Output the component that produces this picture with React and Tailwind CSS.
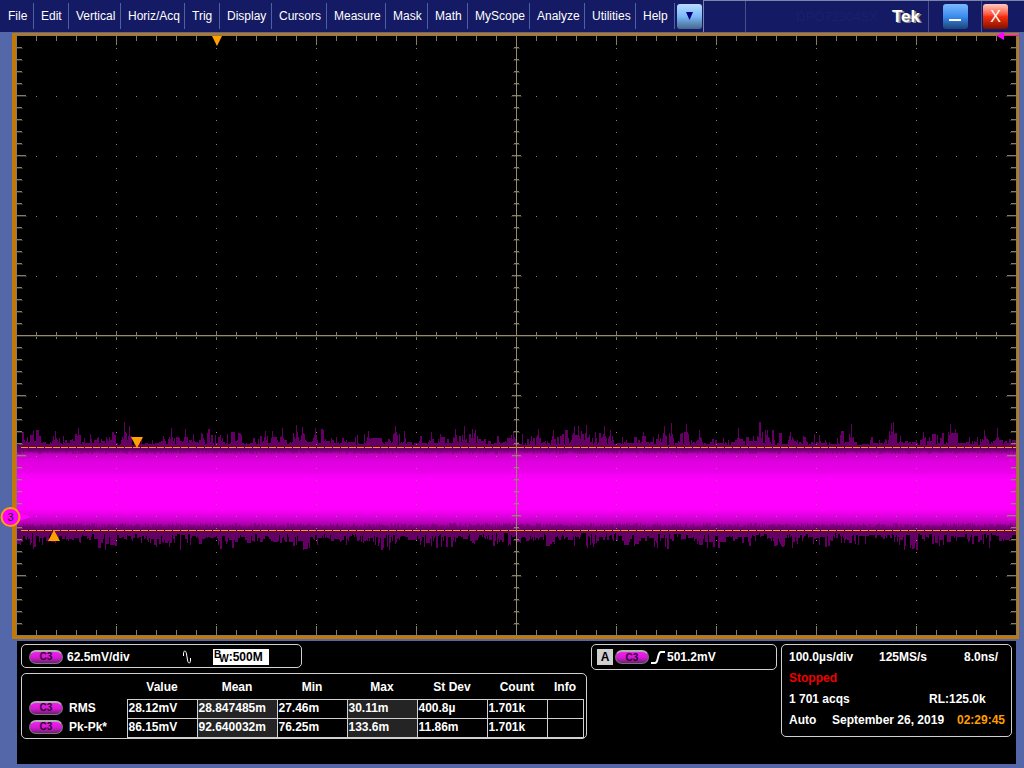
import { useMemo } from 'react';
import clsx from 'clsx';

const menuItems = [
  { label: 'File', width: 'w-[33px]' },
  { label: 'Edit', width: 'w-[35px]' },
  { label: 'Vertical', width: 'w-[52px]' },
  { label: 'Horiz/Acq', width: 'w-[64px]' },
  { label: 'Trig', width: 'w-[35px]' },
  { label: 'Display', width: 'w-[52px]' },
  { label: 'Cursors', width: 'w-[55px]' },
  { label: 'Measure', width: 'w-[59px]' },
  { label: 'Mask', width: 'w-[42px]' },
  { label: 'Math', width: 'w-[40px]' },
  { label: 'MyScope', width: 'w-[62px]' },
  { label: 'Analyze', width: 'w-[55px]' },
  { label: 'Utilities', width: 'w-[51px]' },
  { label: 'Help', width: 'w-[39px]' },
];

const columns = ['Value', 'Mean', 'Min', 'Max', 'St Dev', 'Count', 'Info'];

const measurements = [
  { name: 'RMS', values: ['28.12mV', '28.847485m', '27.46m', '30.11m', '400.8µ', '1.701k', ''] },
  { name: 'Pk-Pk*', values: ['86.15mV', '92.640032m', '76.25m', '133.6m', '11.86m', '1.701k', ''] },
];

// tallest spikes above the band, as [x, y]
const peaks = [
  [38, 396], [61, 393], [107, 387], [112, 391], [154, 393], [168, 394], [176, 399], [185, 399],
  [203, 400], [248, 396], [265, 393], [279, 390], [285, 392], [298, 393], [306, 395], [351, 396],
  [378, 391], [414, 397], [438, 394], [447, 391], [455, 394], [496, 396], [521, 394], [536, 395],
  [557, 391], [561, 391], [569, 390], [587, 391], [593, 395], [626, 397], [647, 391], [654, 388],
  [669, 389], [682, 395], [721, 393], [742, 387], [743, 387], [750, 395], [773, 397], [834, 389],
  [874, 388], [876, 387], [906, 397], [933, 389], [938, 394], [967, 395], [980, 393],
];

function makeRandom(seed) {
  let s = seed;
  return () => {
    s = (s * 1664525 + 1013904223) % 4294967296;
    return s / 4294967296;
  };
}

function buildWave() {
  const rand = makeRandom(72304);
  const peakAt = Object.fromEntries(peaks);
  let spikes = '';
  let fringe = '';
  let low = 410;
  let high = 500;
  for (let x = 0; x < 1000; x++) {
    const near = peakAt[x - 1] || peakAt[x + 1] || peakAt[x - 2] || peakAt[x + 2];
    const swell = 0.7 + 0.3 * Math.sin(x / 9) * Math.sin(x / 23);
    // some columns repeat the one before, so the spikes clump
    if (rand() > 0.35) low = 410 - Math.round(Math.pow(rand(), 3) * 16 * swell + rand() * 3);
    let top = low;
    if (near) top = Math.min(top, Math.round(412 - (412 - near) * (0.3 + rand() * 0.4)));
    if (peakAt[x]) top = peakAt[x];
    const bottomSwell = 0.65 + 0.35 * Math.sin(x / 8) * Math.cos(x / 31);
    if (rand() > 0.35) high = 498 + Math.round(Math.pow(rand(), 1.5) * 17 * bottomSwell + rand() * 4);
    spikes += `M${x + 1.5} ${top}V${high}`;
    const a = 415 + Math.round(rand() * 4);
    const b = 493 - Math.round(rand() * 5);
    fringe += `M${x + 1.5} 413V${a}M${x + 1.5} ${b}V495`;
  }
  return { spikes, fringe };
}

function buildGrid() {
  let dots = '';
  let bright = '';
  let dim = '';
  for (let k = 1; k < 10; k++) {
    if (k === 5) continue;
    for (let i = 1; i < 50; i++) {
      dots += `M${k * 100} ${i * 12 + 1.5}h1`;
      dots += `M${i * 20} ${k * 60 + 1.5}h1`;
    }
  }
  for (let i = 1; i < 50; i++) {
    const x = i * 20 + 0.5;
    const y = i * 12 + 0.5;
    const major = i % 5 === 0;
    bright += `M${x} 1V${major ? 10 : 6}`;
    bright += `M${x} 600V${major ? 591 : 595}`;
    bright += `M${x} ${major ? 296 : 297}V${major ? 305 : 304}`;
    const len = major ? 10 : 6;
    bright += `M1 ${y}h${len - 1}M1000 ${y}h${-len + 1}`;
    bright += `M${major ? 496 : 498} ${y}h${major ? 9 : 5}`;
    dim += `M1 ${y + 1}h${len}M1000 ${y + 1}h${-len}`;
    dim += `M${major ? 495 : 497} ${y + 1}h${major ? 11 : 7}`;
  }
  return { dots, bright, dim };
}

const SourceBadge = () => (
  <span className="flex h-[14px] w-[34px] shrink-0 items-center justify-center rounded-full border border-t-2 border-[#777] border-t-[#b0b0b0] bg-linear-to-b from-[#f020f0] via-[#d818d8] to-[#6e1c70] text-[10px] leading-none font-bold text-[#300030]">
    C3
  </span>
);

const MenuBar = () => (
  <header className="flex h-8 bg-[#141a63] text-[12px] text-white">
    <nav className="flex h-full items-center pl-px">
      {menuItems.map((item) => (
        <button
          key={item.label}
          className={clsx(
            'h-[26px] shrink-0 border-r border-[#4d62a4] pl-[7px] text-left whitespace-nowrap',
            item.width
          )}
        >
          {item.label}
        </button>
      ))}
    </nav>
    <div className="flex w-[28px] items-center pl-[2px]">
      <button
        aria-label="More menus"
        className="flex h-[25px] w-[25px] items-center justify-center rounded-[3px] bg-linear-to-b from-[#b8dcff] via-[#7ab8fa] to-[#46688c]"
      >
        <svg width="7" height="8" viewBox="0 0 7 8">
          <path d="M0 0H7L3.5 8Z" fill="#000080" />
        </svg>
      </button>
    </div>
    <div className="flex flex-1 border-t border-l border-[#7c83ad]">
      <div className="w-[42px] border-r border-[#4a4f86]" />
      <div className="flex flex-1 items-center justify-end gap-[14px] pr-2">
        <span className="text-[13px] text-[#1b2169]">DPO72304SX</span>
        <span className="text-[17px] font-bold [text-shadow:1px_1px_0_#8c8c8c,2px_1px_0_#8c8c8c]">Tek</span>
      </div>
      <div className="flex w-[54px] items-center justify-center border-x border-[#4a4f86]">
        <button
          aria-label="Minimize"
          className="flex h-[25px] w-[25px] items-end justify-center rounded-[3px] bg-linear-to-b from-[#7ab8fa] via-[#3b8cf0] to-[#1c4478] pb-2"
        >
          <span className="h-[2px] w-3 bg-white" />
        </button>
      </div>
      <div className="flex w-[42px] items-center pl-px">
        <button
          aria-label="Close"
          className="flex h-[25px] w-[25px] items-center justify-center rounded-[3px] bg-linear-to-b from-[#ffc8c0] via-[#f83010] to-[#801000] text-[16px]"
        >
          X
        </button>
      </div>
    </div>
  </header>
);

const Graticule = () => {
  const wave = useMemo(buildWave, []);
  const grid = useMemo(buildGrid, []);

  return (
    <svg viewBox="0 0 1001 601" className="block w-full overflow-visible" role="img" aria-label="Channel 3 waveform">
      <defs>
        <linearGradient id="band" gradientUnits="userSpaceOnUse" x1="0" y1="413" x2="0" y2="495">
          <stop offset="0" stopColor="#640064" />
          <stop offset="0.04" stopColor="#8c008c" />
          <stop offset="0.08" stopColor="#c800c8" />
          <stop offset="0.17" stopColor="#e000e0" />
          <stop offset="0.29" stopColor="#ea00ea" />
          <stop offset="0.33" stopColor="#f600f6" />
          <stop offset="0.42" stopColor="#ff00ff" />
          <stop offset="0.74" stopColor="#ff00ff" />
          <stop offset="0.84" stopColor="#dc00dc" />
          <stop offset="0.92" stopColor="#b400b4" />
          <stop offset="0.97" stopColor="#820082" />
          <stop offset="1" stopColor="#640064" />
        </linearGradient>
      </defs>
      <rect width="1001" height="601" fill="#000" />

      <path d={wave.spikes} stroke="#640064" shapeRendering="crispEdges" />
      <rect x="1" y="413" width="999" height="82" fill="url(#band)" />
      <path d={wave.fringe} stroke="#640064" strokeOpacity="0.55" shapeRendering="crispEdges" />
      <path d="M5 412.5H1000M5 495.5H1000" stroke="#ff9c00" strokeDasharray="7 1" />

      <g fill="none" shapeRendering="crispEdges">
        <path d={grid.dots} stroke="#8a8468" />
        <path d={grid.dim} stroke="#8a8068" strokeOpacity="0.35" />
        <path d={grid.bright} stroke="#968a6e" strokeOpacity="0.9" />
        <path d="M500.5 1V600M1 300.5H1000" stroke="#968a6e" />
        <path d="M1 301.5H1000" stroke="#2c2a20" />
        <rect x="0.5" y="0.5" width="1000" height="600" stroke="#857b66" />
      </g>

      {/* trigger and cursor markers */}
      <path d="M196 1H206L201 11Z" fill="#ffa200" />
      <path d="M115 402H127L121 413Z" fill="#ffa200" />
      <path d="M32 506H44L38 495Z" fill="#ffa200" />
      <path d="M980 .5L988 -3V5ZM987 0H1003V1H987Z" fill="#f0f" />

      {/* channel 3 reference */}
      <path d="M3 478L15 482L3 486Z" fill="#f0f" />
      <circle cx="-5.500" cy="482" r="9" fill="#f0f" stroke="#ffa200" strokeWidth="2" />
      <text x="-5.500" y="486" textAnchor="middle" fontSize="11" fill="#200020">3</text>
    </svg>
  );
};

const ChannelBox = () => (
  <section className="flex h-[24px] w-[281px] items-center rounded-[5px] border border-[#d0d0d0] px-[7px] pt-px">
    <SourceBadge />
    <span className="ml-1 w-[115px]">62.5mV/div</span>
    <svg width="10" height="14" viewBox="0 0 10 14" fill="none" stroke="#fff">
      <path d="M1.500 6V4C1.500 0 4 0 4.500 4L5.500 10C6 14 8.500 14 8.500 10V8" />
    </svg>
    <span className="ml-[21px] flex h-4 w-[56px] shrink-0 items-center bg-white pl-px leading-none text-black">
      <span className="flex h-[14px] text-[10px]">
        <span className="self-start">B</span>
        <span className="-ml-[2px] self-end">W</span>
      </span>
      :500M
    </span>
  </section>
);

const MeasurementTable = () => (
  <section className="h-[66px] rounded-[5px] border border-[#d0d0d0]">
    <table className="w-[561px] table-fixed border-collapse">
      <colgroup>
        <col className="w-[105px]" />
        <col className="w-[70px]" />
        <col className="w-[80px]" />
        <col className="w-[70px]" />
        <col className="w-[70px]" />
        <col className="w-[70px]" />
        <col className="w-[60px]" />
        <col className="w-[36px]" />
      </colgroup>
      <thead>
        <tr className="h-[25px]">
          <td />
          {columns.map((column) => (
            <th key={column} scope="col" className="p-0 pt-[2px] text-center font-bold">
              {column}
            </th>
          ))}
        </tr>
      </thead>
      <tbody>
        {measurements.map((row) => (
          <tr key={row.name} className="h-[19px] leading-[14px]">
            <th scope="row" className="p-0 pb-[2px] text-left font-bold">
              <span className="flex items-center gap-[6px] pl-[7px]">
                <SourceBadge />
                {row.name}
              </span>
            </th>
            {row.values.map((value, i) => (
              <td
                key={columns[i]}
                className={clsx(
                  'border border-[#d0d0d0] p-0 pb-[2px] pl-px whitespace-nowrap',
                  (i === 1 || i === 3) && 'bg-[#242424]'
                )}
              >
                {value}
              </td>
            ))}
          </tr>
        ))}
      </tbody>
    </table>
  </section>
);

const TriggerBox = () => (
  <section className="flex h-[26px] w-[186px] shrink-0 items-center rounded-[5px] border border-[#d0d0d0] pl-[5px]">
    <span className="mr-[2px] flex h-4 w-4 items-center justify-center bg-[#d0d0d0] text-black">A</span>
    <SourceBadge />
    <svg className="mx-[2px]" width="14" height="14" viewBox="0 0 14 14" fill="none" stroke="#fff" strokeWidth="2">
      <path d="M0 13H4C6 13 6 11 7 7.500S8 2 10 2H14" />
    </svg>
    501.2mV
  </section>
);

const AcquisitionBox = () => (
  <section className="flex h-[93px] w-[231px] shrink-0 flex-col gap-[5px] rounded-[5px] border border-[#d0d0d0] pt-1 pr-[6px] pl-[7px]">
    <div className="flex">
      <span className="w-[90px]">100.0µs/div</span>
      <span className="w-[85px]">125MS/s</span>
      <span>8.0ns/</span>
    </div>
    <div className="text-[#f00000]">Stopped</div>
    <div className="flex">
      <span className="w-[140px]">1 701 acqs</span>
      <span>RL:125.0k</span>
    </div>
    <div className="flex">
      <span className="w-[43px]">Auto</span>
      <span className="flex-1">September 26, 2019</span>
      <time className="text-[#ff9c00]">02:29:45</time>
    </div>
  </section>
);

export default function App() {
  return (
    <div className="min-h-screen bg-[#5467a8] pb-1 font-['Liberation_Sans',Arial,sans-serif]">
      <MenuBar />
      <main className="pt-px pr-[5px] pl-3">
        <div className="border-t-2 border-r-2 border-b-[3px] border-l-4 border-[#c07808]">
          <Graticule />
        </div>
      </main>
      <footer className="mt-[2px] mr-2 ml-[17px] flex h-[123px] gap-1 bg-black px-1 pt-[3px] text-[12px] leading-4 font-bold text-white">
        <div className="flex w-[566px] shrink-0 flex-col gap-[5px]">
          <ChannelBox />
          <MeasurementTable />
        </div>
        <TriggerBox />
        <AcquisitionBox />
      </footer>
    </div>
  );
}
